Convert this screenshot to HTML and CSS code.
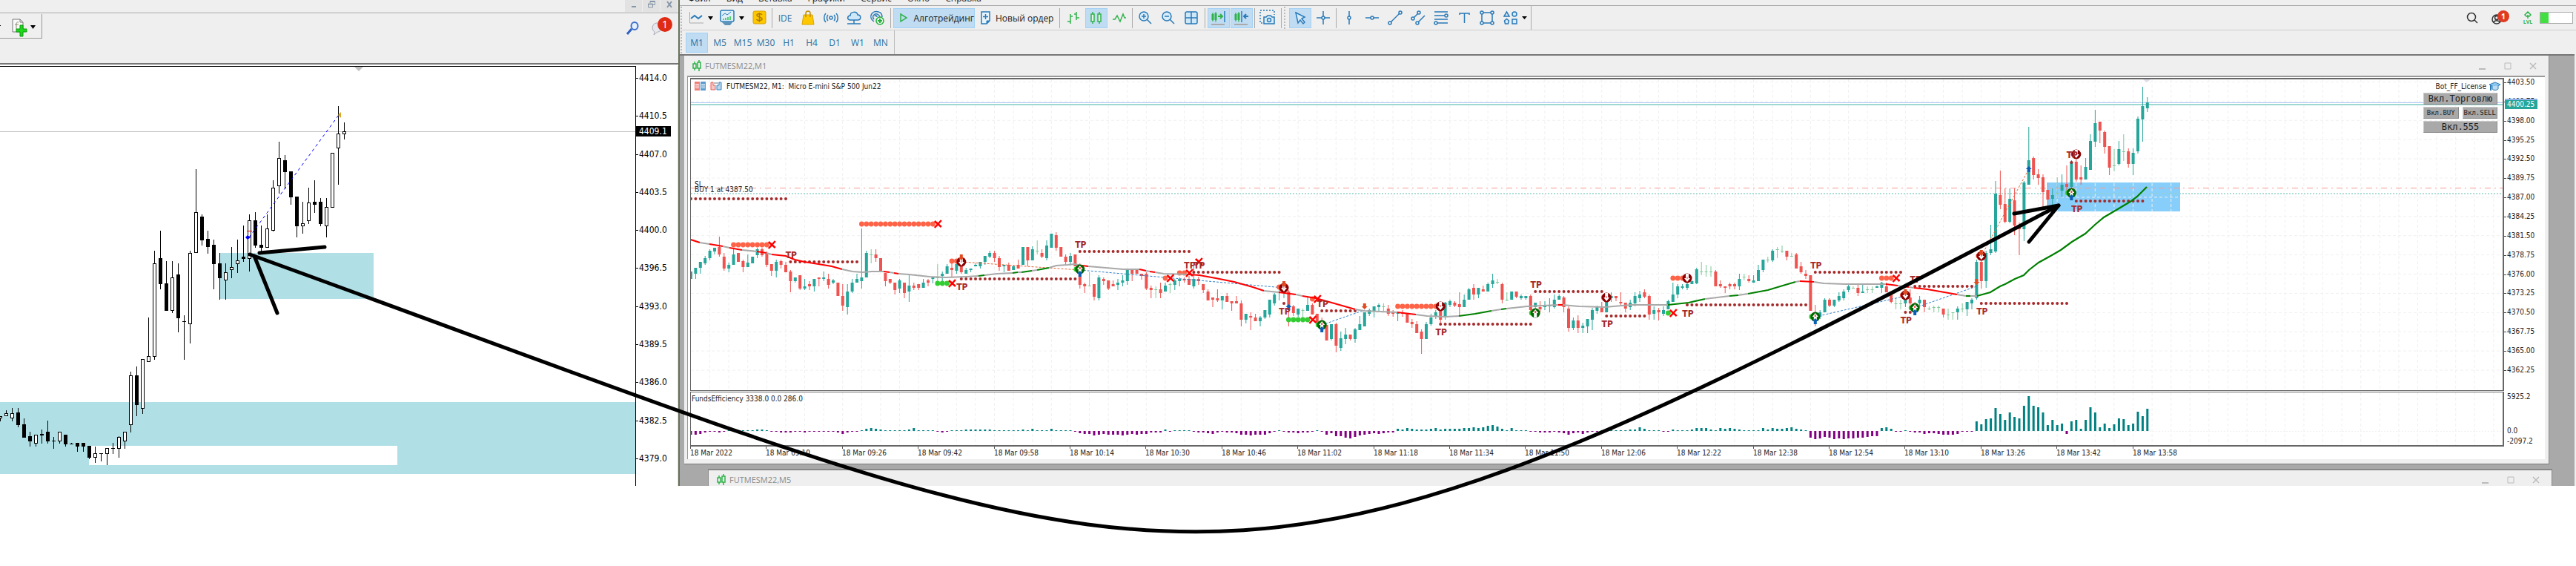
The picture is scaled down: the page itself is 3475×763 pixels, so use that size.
FILE: index.html
```html
<!DOCTYPE html>
<html lang="ru">
<head>
    <meta charset="UTF-8">
    <meta name="viewport" content="width=device-width, initial-scale=1.0">
    <title>FUTMESM22,M1</title>
    <link rel="stylesheet" href="styles.css">
</head>
<body>
    <div class="desktop">
        <section class="terminal-left">
            <div class="left-title">
                <button aria-label="Свернуть"><svg width="12" height="12"><path d="M3 9h6" stroke="#8796a8" stroke-width="2"/></svg></button>
                <button aria-label="Восстановить"><svg width="12" height="12" fill="none" stroke="#8796a8" stroke-width="1"><path d="M4 4V1.500h6.500v5H8M1.500 5h6v5h-6zM4 2.500h6.500M1.500 6h6"/></svg></button>
                <button aria-label="Закрыть"><svg width="12" height="12"><path d="M3 2l6 8M9 2l-6 8" stroke="#8796a8" stroke-width="2"/></svg></button>
            </div>
            <div class="left-toolbar">
                <button class="indicator-btn" aria-label="Индикаторы">
                    <svg width="54" height="30" viewBox="0 0 54 30">
                        <path d="M0 14h1v1H0z"/>
                        <path d="M17 6h10l4 4v13H17z" fill="#fafafa" stroke="#777"/>
                        <path d="M27 6v4h4" fill="none" stroke="#777"/>
                        <path d="M25 10c-3-1-3 2-3 4v5M20 13h5" fill="none" stroke="#8a8a70"/>
                        <path d="M27 14h4v5h5v4h-5v6h-4v-6h-5v-4h5z" fill="#1fd61f" stroke="#0b9a0b"/>
                        <path d="M41 14h7l-3.500 5z"/>
                    </svg>
                </button>
                <div class="left-tools">
                    <button aria-label="Поиск"><svg width="20" height="20" fill="none"><path d="M8 11l-6 7" stroke="#2f62c0" stroke-width="3"/><ellipse cx="12" cy="7" rx="4.500" ry="5" fill="#e4f0ff" stroke="#3f6fc8" stroke-width="2"/></svg></button>
                    <button class="chat" aria-label="Сообщения"><svg width="34" height="28"><path d="M10 10c-6 0-8 9-3 12l-1 4 5-4c7 0 8-12-1-12z" fill="#e6e8ee" stroke="#a9adb5"/><circle cx="21" cy="12" r="10" fill="#e02b14"/><text x="21" y="17" class="badge-text">1</text></svg></button>
                </div>
            </div>
            <div class="left-body">
                <svg class="left-chart" id="left-chart"></svg>
                <div class="left-axis" id="left-axis">
                    <span class="left-price">4409.1</span>
                </div>
            </div>
        </section>

        <section class="terminal-right">
            <nav class="menu">
                <a href="#">Файл</a><a href="#">Вид</a><a href="#">Вставка</a><a href="#">Графики</a><a href="#">Сервис</a><a href="#">Окно</a><a href="#">Справка</a>
            </nav>
            <div class="toolbar">
                <span class="grip"></span>
                <button class="drop" aria-label="График"><svg width="34" height="22"><path d="M1.500 3v15H20" fill="none" stroke="#aaa"/><path d="M3 12l5-4 5 4 5-4" fill="none" stroke="#2a7ab8" stroke-width="2"/><path d="M26 9h7l-3.500 5z"/></svg></button>
                <button class="drop" aria-label="Шаблоны"><svg width="34" height="22"><rect x="1" y="1" width="18" height="15" rx="2" fill="#dff0fb" stroke="#2a7ab8" stroke-width="1.500"/><path d="M3 8l4-3 3 2 5-4" fill="none" stroke="#2a7ab8"/><path d="M5 14v-2M8 14v-3M11 14v-4M14 14V9" stroke="#2fbf4a" stroke-width="1.500"/><path d="M3 17l4 4h7l3-4z" fill="#5d93b8"/><path d="M26 9h7l-3.500 5z"/></svg></button>
                <button class="tool" aria-label="Символы"><svg width="20" height="20"><rect x="2" y="1" width="17" height="17" rx="2" fill="#fdc800" stroke="#d9a200"/><path d="M14 6c-1-2-7-2-7 .500 0 3 7 2 7 5 0 2.500-6 3-7.500 .500M10.500 3v13" fill="none" stroke="#b07c00" stroke-width="1.500"/></svg></button>
                <span class="sep"></span>
                <button class="tool ide">IDE</button>
                <button class="tool" aria-label="Маркет"><svg width="20" height="20"><path d="M4 6h12l2 13H2z" fill="#fdc800" stroke="#dba400"/><path d="M7 9V4c0-4 6-4 6 0v5" fill="none" stroke="#c28f00" stroke-width="1.500"/></svg></button>
                <button class="tool" aria-label="Сигналы"><svg width="20" height="20" fill="none" stroke="#2a7ab8" stroke-width="1.500"><circle cx="10" cy="10" r="2"/><path d="M6 6c-2 2-2 6 0 8M14 6c2 2 2 6 0 8M3 4c-3 3-3 9 0 12M17 4c3 3 3 9 0 12"/></svg></button>
                <button class="tool" aria-label="VPS"><svg width="20" height="20" fill="none" stroke="#2a7ab8" stroke-width="1.500"><path d="M5 13c-5 0-4-6 0-6 0-6 9-6 10-1 5 0 5 7 0 7z" fill="#cfe8f8"/><path d="M10 13v5M1 18h18"/></svg></button>
                <button class="tool" aria-label="Трансляция"><svg width="20" height="20" fill="none" stroke="#2a7ab8" stroke-width="1.500"><path d="M6 15C-3 9 4-1 12 2c4 1 5 5 5 7M6 12C2 7 8 3 12 6c1 1 2 2 2 3M7 8c1-2 3-1 3 1"/><circle cx="14" cy="14" r="5" fill="#e6f8e6" stroke="#27ae3f"/><path d="M14 11v6M11 14h6" stroke="#27ae3f" stroke-width="2"/></svg></button>
                <span class="sep wide"></span>
                <button class="text-tool active"><svg width="12" height="14"><path d="M2 2l8 5-8 5z" fill="none" stroke="#2fb34a" stroke-width="1.500"/></svg>Алготрейдинг</button>
                <button class="text-tool order"><svg width="14" height="18"><path d="M1 1h11v12l-4 4H1z" fill="#e9f5fd" stroke="#2a7ab8" stroke-width="1.500"/><path d="M8 17v-4h4" fill="#2a7ab8" stroke="#2a7ab8"/><path d="M6.500 4v7M3 7.500h7" stroke="#2a7ab8" stroke-width="1.500"/></svg>Новый ордер</button>
                <span class="sep wide"></span>
                <button class="tool" aria-label="Бары"><svg width="20" height="20" fill="none" stroke="#2fb34a" stroke-width="1.500"><path d="M6 5v13M2 15h4M6 8h3M14 2v11M11 5h3M14 10h4"/></svg></button>
                <button class="tool active" aria-label="Свечи"><svg width="20" height="20" fill="#e4f7e4" stroke="#2fb34a" stroke-width="1.500"><path d="M5 2v16M14 2v16"/><rect x="3" y="5" width="4" height="10"/><rect x="12" y="5" width="4" height="10"/></svg></button>
                <button class="tool" aria-label="Линия"><svg width="20" height="20" fill="none" stroke="#2fb34a" stroke-width="1.500"><path d="M1 12h3l3-5 4 8 4-10 2 5h2"/></svg></button>
                <span class="sep"></span>
                <button class="tool" aria-label="Увеличить"><svg width="20" height="20" fill="none" stroke="#2a7ab8" stroke-width="1.500"><circle cx="8" cy="8" r="6" fill="#d8edf9"/><path d="M12 12l6 6M8 5v6M5 8h6"/></svg></button>
                <button class="tool" aria-label="Уменьшить"><svg width="20" height="20" fill="none" stroke="#2a7ab8" stroke-width="1.500"><circle cx="8" cy="8" r="6" fill="#d8edf9"/><path d="M12 12l6 6M5 8h6"/></svg></button>
                <button class="tool" aria-label="Окна"><svg width="20" height="20" fill="#cfe8f8" stroke="#2a7ab8" stroke-width="1.500"><rect x="2" y="2" width="16" height="16" rx="2"/><path d="M10 2v16M2 10h16"/></svg></button>
                <span class="sep wide"></span>
                <button class="tool active" aria-label="Автопрокрутка"><svg width="22" height="22" fill="#2fb34a" stroke="#2fb34a"><path d="M3 4v12M7 3v14" stroke-width="1"/><path d="M2 6h2v8H2zM6 5h2v9H6z"/><path d="M10 9h6M13 6l3 3-3 3" fill="none" stroke-width="2"/><path d="M19 2v15" stroke="#2a7ab8" stroke-width="1.500"/><path d="M1 20h18" stroke="#aaa" stroke-width="2"/></svg></button>
                <button class="tool active" aria-label="Сдвиг"><svg width="22" height="22" fill="#2fb34a" stroke="#2fb34a"><path d="M3 4v12M7 3v14" stroke-width="1"/><path d="M2 6h2v8H2zM6 5h2v9H6z"/><path d="M11 2v15" stroke="#2a7ab8" stroke-width="1.500"/><path d="M20 9h-6M17 6l-3 3 3 3" fill="none" stroke="#2a7ab8" stroke-width="2"/><path d="M1 20h18" stroke="#aaa" stroke-width="2"/></svg></button>
                <span class="sep"></span>
                <button class="tool" aria-label="Снимок"><svg width="22" height="22" fill="none" stroke="#2a7ab8" stroke-width="1.500"><path d="M4 18H1V1h19v6" stroke-dasharray="2 2"/><path d="M6 10h3l2-2h4l2 2h3v9H6z" fill="#d8edf9"/><circle cx="13" cy="14" r="2.500"/></svg></button>
                <span class="sep wide"></span>
                <span class="grip second"></span>
                <button class="tool active" aria-label="Курсор"><svg width="20" height="20"><path d="M4 3l12 6-4 2 4 5-2 2-4-5-3 4z" fill="#d8edf9" stroke="#2a7ab8" stroke-width="1.500"/></svg></button>
                <button class="tool" aria-label="Перекрестие"><svg width="20" height="20" fill="#efefef" stroke="#2a7ab8" stroke-width="1.500"><path d="M10 1v18M1 10h18"/><circle cx="10" cy="10" r="2"/></svg></button>
                <span class="sep"></span>
                <button class="tool" aria-label="Вертикальная линия"><svg width="20" height="20" fill="#efefef" stroke="#2a7ab8" stroke-width="1.500"><path d="M10 1v18"/><circle cx="10" cy="10" r="2"/></svg></button>
                <button class="tool" aria-label="Горизонтальная линия"><svg width="20" height="20" fill="#efefef" stroke="#2a7ab8" stroke-width="1.500"><path d="M1 10h18"/><circle cx="10" cy="10" r="2"/></svg></button>
                <button class="tool" aria-label="Трендовая линия"><svg width="20" height="20" fill="#efefef" stroke="#2a7ab8" stroke-width="1.500"><path d="M3 17L17 3"/><circle cx="3" cy="17" r="2"/><circle cx="17" cy="3" r="2"/></svg></button>
                <button class="tool" aria-label="Канал"><svg width="20" height="20" fill="#efefef" stroke="#2a7ab8" stroke-width="1.500"><path d="M3 11l8-8M9 17l10-10"/><circle cx="3" cy="11" r="2"/><circle cx="11" cy="3" r="2"/><circle cx="9" cy="17" r="2"/></svg></button>
                <button class="tool" aria-label="Фибоначчи"><svg width="20" height="20" fill="#efefef" stroke="#2a7ab8" stroke-width="1.500"><path d="M1 2h18M1 7h15M1 12h18M4 17h15"/><circle cx="17" cy="7" r="2"/><circle cx="3" cy="17" r="2"/></svg></button>
                <button class="tool" aria-label="Текст"><svg width="20" height="20" fill="none" stroke="#2a7ab8" stroke-width="1.500"><path d="M4 6V4h13v2M10.500 4v13"/></svg></button>
                <button class="tool" aria-label="Прямоугольник"><svg width="20" height="20" fill="#efefef" stroke="#2a7ab8" stroke-width="1.500"><path d="M3 3h14v14H3z"/><circle cx="3" cy="3" r="2"/><circle cx="17" cy="3" r="2"/><circle cx="3" cy="17" r="2"/><circle cx="17" cy="17" r="2"/></svg></button>
                <button class="drop shapes" aria-label="Фигуры"><svg width="32" height="20" fill="#d8edf9" stroke="#2a7ab8" stroke-width="1.500"><path d="M1 8l3.500-6L8 8z"/><circle cx="15" cy="5" r="3"/><path d="M4.500 11.500l3 2.500-1 4h-4l-1-4z"/><rect x="12" y="12" width="6" height="6"/><path d="M25 8h7l-3.500 4z" fill="#000" stroke="none"/></svg></button>
                <div class="status">
                    <svg width="16" height="16" fill="none" stroke="#333" stroke-width="1.500"><circle cx="7" cy="7" r="5.500"/><path d="M11 11l4 4"/></svg>
                    <svg width="26" height="20" fill="none" stroke="#333" stroke-width="1.500"><circle cx="8" cy="12" r="6"/><circle cx="8" cy="10" r="2.500"/><path d="M4 16c1-3 7-3 8 0"/><circle cx="17" cy="8" r="8" fill="#e03a22" stroke="none"/><text x="17" y="12" class="badge-small">1</text></svg>
                    <svg width="14" height="18" fill="none" stroke="#2fb34a" stroke-width="1.500"><path d="M7 1l4 4-2 2H5L3 5zM7 5v5"/><text x="7" y="17" class="lvl">LVL</text></svg>
                    <div class="level" role="meter" aria-label="LVL" aria-valuenow="26"><div style="width: 26%"></div></div>
                </div>
            </div>
            <div class="frames-bar">
                <span class="grip"></span>
                <button class="tool active">M1</button>
                <button class="tool">M5</button>
                <button class="tool">M15</button>
                <button class="tool">M30</button>
                <button class="tool">H1</button>
                <button class="tool">H4</button>
                <button class="tool">D1</button>
                <button class="tool">W1</button>
                <button class="tool">MN</button>
            </div>

            <div class="mdi">
                <div class="window">
                    <div class="window-title">
                        <svg width="12" height="16" fill="none" stroke="#2fb34a" stroke-width="1.500"><path d="M3 2v12M9 0v15"/><rect x="1" y="5" width="4" height="6" fill="#efefef"/><rect x="7" y="3" width="4" height="8" fill="#efefef"/></svg>
                        <h2>FUTMESM22,M1</h2>
                        <div class="window-buttons">
                            <button aria-label="Свернуть"><svg width="10" height="10"><path d="M0 9h9" stroke="#bbb" stroke-width="2"/></svg></button>
                            <button aria-label="Развернуть"><svg width="10" height="10"><path d="M1 1h8v8H1z" fill="none" stroke="#bbb" stroke-width="1"/></svg></button>
                            <button aria-label="Закрыть"><svg width="10" height="10"><path d="M1 1l8 8M9 1l-8 8" stroke="#bbb" stroke-width="1.500"/></svg></button>
                        </div>
                    </div>
                    <div class="frame">
                        <div class="panes">
                            <svg class="price-pane" id="price-pane"></svg>
                            <div class="chart-caption">
                                <svg width="15" height="12"><path d="M0 0h7v12H0z" fill="#ef7f79"/><path d="M8 0h7v12H8z" fill="#5a9bcd"/><path d="M1 3.500h5M1 6h5M1 8.500h5M9 3.500h5M9 6h5M9 8.500h5" stroke="#fff"/></svg>
                                <svg width="16" height="12"><path d="M1 1h3v4h3v6H1z" fill="#f7c7c4" stroke="#e2635c"/><path d="M15 1h-3v4H9v6h6z" fill="#b9d8ee" stroke="#3984bf"/><path d="M5 1h6v2H5z" fill="#bbb"/></svg>
                                <span>FUTMESM22, M1:&nbsp; Micro E-mini S&amp;P 500 Jun22</span>
                            </div>
                            <div class="bot">
                                <div class="bot-name">Bot_FF_License
                                    <svg width="15" height="13" stroke="#2a7ab8"><path d="M0 4l8-3 7 3-7 4z" fill="#8cc8ee"/><path d="M4 6v4c2 2 6 2 8 0V6" fill="#b9dcf2"/><path d="M2 5v7" stroke-width="2"/></svg>
                                </div>
                                <button>Вкл.Торговлю</button>
                                <div class="bot-pair">
                                    <button>Вкл.BUY</button>
                                    <button>Вкл.SELL</button>
                                </div>
                                <button>Вкл.555</button>
                            </div>
                            <svg class="funds-pane" id="funds-pane"></svg>
                            <svg class="time-axis" id="time-axis"></svg>
                        </div>
                        <div class="scales">
                            <div class="price-axis" id="price-axis">
                                <span class="last-price">4400.25</span>
                            </div>
                            <div class="funds-axis">
                                <span>5925.2</span>
                                <span class="zero">0.0</span>
                                <span>-2097.2</span>
                            </div>
                        </div>
                    </div>
                </div>
                <div class="window next">
                    <div class="window-title">
                        <svg width="12" height="16" fill="none" stroke="#2fb34a" stroke-width="1.500"><path d="M3 2v12M9 0v15"/><rect x="1" y="5" width="4" height="6" fill="#efefef"/><rect x="7" y="3" width="4" height="8" fill="#efefef"/></svg>
                        <h2>FUTMESM22,M5</h2>
                        <div class="window-buttons">
                            <button aria-label="Свернуть"><svg width="10" height="10"><path d="M0 9h9" stroke="#bbb" stroke-width="2"/></svg></button>
                            <button aria-label="Развернуть"><svg width="10" height="10"><path d="M1 1h8v8H1z" fill="none" stroke="#bbb" stroke-width="1"/></svg></button>
                            <button aria-label="Закрыть"><svg width="10" height="10"><path d="M1 1l8 8M9 1l-8 8" stroke="#bbb" stroke-width="1.500"/></svg></button>
                        </div>
                    </div>
                </div>
            </div>
        </section>
    </div>

    <!-- hand drawn arrow between the two terminals -->
    <svg class="arrow">
        <path d="M337 343C1630 810 1610 895 2777 277"/>
        <path d="M438 333L350 341M343 345L374 422"/>
        <path d="M2717 288L2777 277L2737 326"/>
    </svg>

    <script src="charts.js"></script>
</body>
</html>
```
FILE: styles.css
```css
* {
    box-sizing: border-box;
}

body {
    margin: 0;
    background-color: #fff;
    color: #222;
    font-family: "Open Sans", "Noto Sans", sans-serif;
    font-size: 12px;
}

button {
    margin: 0;
    padding: 0;
    border: none;
    background: none;
    color: inherit;
    font: inherit;
    cursor: pointer;
}

svg {
    display: block;
}

.desktop {
    display: grid;
    grid-template-columns: 915fr 2560fr;
    height: 655px;
    overflow: hidden;
}

/* left terminal */
.terminal-left {
    display: flex;
    flex-direction: column;
    min-width: 0;
    background-color: #efefef;
}

.left-title {
    display: flex;
    justify-content: flex-end;
    gap: 1px;
    height: 18px;
    padding-right: 1px;
    border-bottom: 1px solid #999;
}

.left-title button {
    display: flex;
    justify-content: center;
    width: 23px;
    height: 16px;
    background-color: #e2e2e2;
}

.left-toolbar {
    display: flex;
    justify-content: space-between;
    align-items: flex-start;
    height: 69px;
    border-top: 1px solid #fff;
    border-bottom: 2px solid #777;
}

.indicator-btn {
    width: 57px;
    height: 33px;
    border-right: 1px solid #999;
    border-bottom: 1px solid #999;
}

.left-tools {
    display: flex;
    gap: 12px;
    padding: 6px 5px 0 0;
}

.left-tools button {
    margin-top: 1px;
}

.chat svg {
    margin-top: -5px;
}

.badge-text {
    fill: #fff;
    font-size: 14px;
    text-anchor: middle;
}

.left-body {
    display: flex;
    flex: 1;
    padding-top: 2px;
    background-color: #fff;
}

.left-chart {
    flex: 1;
    min-width: 0;
    height: 566px;
    border-top: 1px solid #000;
    border-right: 1px solid #000;
}

.left-axis {
    position: relative;
    display: flex;
    flex-direction: column;
    justify-content: space-between;
    width: 57px;
    padding: 9px 0 31px 4px;
    border-right: 1px solid #ddd;
    color: #000;
    font-family: "DejaVu Sans Condensed", "DejaVu Sans", sans-serif;
    line-height: 14px;
}

.left-axis span::before {
    content: "";
    float: left;
    width: 3px;
    height: 1px;
    margin: 7px 0 0 -4px;
    background-color: #000;
}

.left-axis .left-price {
    position: absolute;
    top: 81px;
    left: 0;
    padding: 0 5px 0 4px;
    background-color: #000;
    color: #fff;
}

/* right terminal */
.terminal-right {
    display: flex;
    flex-direction: column;
    min-width: 0;
    border-left: 2px solid #65705a;
    background-color: #efefef;
}

.menu {
    display: flex;
    gap: 21px;
    height: 7px;
    padding-left: 11px;
    overflow: hidden;
    line-height: 16px;
}

.menu a {
    height: 16px;
    margin-top: -10px;
    color: #222;
    text-decoration: none;
}

.toolbar {
    display: flex;
    align-items: center;
    gap: 1px;
    height: 34px;
    padding-left: 1px;
    border-top: 1px solid #aaa;
    border-bottom: 1px solid #ccc;
}

.grip {
    width: 2px;
    height: 30px;
    margin-right: 4px;
    border-left: 2px dotted #bbb;
}

.grip.second {
    width: 3px;
    margin-right: 3px;
}

.sep {
    width: 1px;
    height: 27px;
    margin: 0 1px;
    background-color: #aaa;
}

.sep.wide {
    margin: 0 2px;
}

.tool {
    display: flex;
    flex: none;
    justify-content: center;
    align-items: center;
    width: 30px;
    height: 27px;
    color: #2a6f9f;
}

.drop {
    flex: none;
    width: 41px;
    padding-left: 4px;
}

.drop.shapes {
    width: 44px;
    height: 32px;
    padding-left: 6px;
    border-right: 1px solid #aaa;
}

.active {
    border: 1px solid #a3d1f5;
    background-color: #c0dcf3;
}

.text-tool {
    display: flex;
    align-items: center;
    gap: 8px;
    width: 110px;
    height: 27px;
    padding-left: 7px;
    white-space: nowrap;
}

.text-tool.order {
    gap: 6px;
}

.status {
    display: flex;
    align-items: center;
    gap: 17px;
    margin-left: auto;
    padding-right: 4px;
}

.badge-small {
    fill: #fff;
    stroke: none;
    font-size: 11px;
    font-weight: bold;
    text-anchor: middle;
}

.lvl {
    fill: #2fb34a;
    stroke: none;
    font-size: 7px;
    font-weight: bold;
    text-anchor: middle;
}

.level {
    width: 45px;
    height: 16px;
    margin-left: -8px;
    border: 1px solid #aaa;
    background-color: #fff;
}

.level div {
    height: 100%;
    background-color: #41df41;
}

.frames-bar {
    display: flex;
    align-items: center;
    gap: 1px;
    width: 290px;
    height: 32px;
    padding-left: 1px;
    border-right: 1px solid #bbb;
}

.mdi {
    flex: 1;
    min-height: 0;
    margin-right: 2px;
    padding: 0 34px 0 6px;
    border-top: 2px solid #777;
    background-color: #a9a9a9;
}

.window {
    height: 551px;
    border-right: 1px solid #888;
    border-bottom: 1px solid #777;
    background-color: #efefef;
}

.window.next {
    height: 24px;
    margin: 6px -4px 0 32px;
    border-top: 2px solid #888;
    border-left: 1px solid #888;
}

.window-title {
    display: flex;
    align-items: center;
    gap: 5px;
    height: 27px;
    padding: 0 16px 0 11px;
}

.window.next .window-title {
    height: 25px;
}

.window-title h2 {
    margin: 0;
    color: #8c8c8c;
    font-size: 11px;
    font-weight: normal;
}

.window-buttons {
    display: flex;
    gap: 24px;
    margin-left: auto;
}

.frame {
    display: flex;
    height: 517px;
    margin: 0 5px 0 4px;
    padding: 1px 0 0 3px;
    border-top: 2px solid #999;
    border-left: 1px solid #999;
    background-color: #fff;
}

.panes {
    position: relative;
    flex: 1;
    min-width: 0;
    font-family: "DejaVu Sans Condensed", "DejaVu Sans", sans-serif;
    font-size: 10px;
}

.price-pane,
.funds-pane,
.time-axis {
    width: 100%;
    border: 0 solid #666;
}

.price-pane {
    height: 422px;
    border-width: 2px 2px 1px 1px;
}

.funds-pane {
    height: 74px;
    margin-top: 1px;
    border-width: 1px 2px 2px 1px;
}

.time-axis {
    height: 18px;
}

.panes text {
    fill: #222;
}

.panes .tp {
    fill: #a52a2a;
    font-size: 12px;
    font-weight: bold;
    text-anchor: middle;
}

.chart-caption {
    position: absolute;
    top: 5px;
    left: 6px;
    display: flex;
    align-items: center;
    gap: 6px;
    height: 12px;
}

/* expert panel drawn over the chart */
.bot {
    position: absolute;
    top: 5px;
    right: 9px;
    display: flex;
    flex-direction: column;
    gap: 3px;
    width: 100px;
}

.bot-name {
    display: flex;
    align-items: center;
    justify-content: flex-end;
    gap: 4px;
    height: 12px;
    margin-right: -4px;
}

.bot button {
    height: 16px;
    border: 1px solid #c9c9c9;
    border-right-color: #888;
    border-bottom-color: #888;
    background-color: #a9a9a9;
    font-family: "DejaVu Sans Mono", monospace;
    font-size: 12px;
    line-height: 14px;
    white-space: nowrap;
}

.bot-pair {
    display: grid;
    grid-template-columns: 1fr 1fr;
    gap: 5px;
}

.bot .bot-pair button {
    font-size: 9px;
}

.scales {
    width: 55px;
    font-family: "DejaVu Sans Condensed", "DejaVu Sans", sans-serif;
    font-size: 10px;
    line-height: 12px;
}

.price-axis {
    position: relative;
    display: flex;
    flex-direction: column;
    justify-content: space-between;
    height: 400px;
    padding-left: 4px;
}

.price-axis span::before {
    content: "";
    float: left;
    width: 3px;
    height: 1px;
    margin: 6px 0 0 -4px;
    background-color: #444;
}

.price-axis .last-price {
    position: absolute;
    top: 28px;
    left: 1px;
    width: 44px;
    padding: 0 3px;
    border-top: 2px solid #8fb2e8;
    background-color: #26a69a;
    color: #fff;
}

.price-axis .last-price::before {
    display: none;
}

.funds-axis {
    display: flex;
    flex-direction: column;
    height: 72px;
    margin-top: 24px;
    padding-left: 4px;
}

.funds-axis .zero {
    margin: 34px 0 2px;
}

.arrow {
    position: absolute;
    top: 0;
    left: 0;
    width: 100%;
    height: 763px;
    fill: none;
    stroke: #000;
    stroke-width: 5;
    stroke-linecap: round;
    stroke-linejoin: round;
    pointer-events: none;
}
```
FILE: charts.js
```js
// candle: direction (u/d/n) + high,open-close top,open-close bottom,low
var leftCandles = `u561,561,564,568 u553,557,561,561 u550,557,564,568 d550,556,573,576 d564,572,590,590
d582,588,595,602 u586,586,598,602 d579,585,587,598 d567,582,595,598 n589,594,595,605
u582,582,595,598 d586,586,599,602 n597,598,599,599 d597,597,602,609 d597,597,602,609
d601,601,617,619 u602,611,617,624 n611,611,612,622 u604,604,612,627 n597,604,605,612
u588,589,605,617 u582,582,595,605 u501,506,573,583 d494,506,546,561 u484,484,551,558
u428,480,488,488 u338,355,481,485 d311,348,383,390 d352,382,419,419 u352,374,419,422
d355,370,429,448 n425,433,434,485 u338,341,437,463 u228,286,341,341 d289,292,324,331
d311,322,333,342 d323,330,356,390 d341,355,375,404 u355,367,378,404 u333,360,364,375
u323,351,356,368 d304,346,349,353 u289,297,349,366 d286,297,331,334 d304,330,334,340
u289,308,334,334 u243,253,311,312 u191,213,251,261 d209,216,232,255 d231,231,266,276
d265,265,305,320 u272,301,305,315 u253,273,298,302 d243,272,276,287 d267,272,302,305
u267,279,305,320 u206,206,280,280 u143,180,200,249 u165,177,181,188`;

var candles = `u366,366,376,376 u361,361,369,376 u353,353,361,369 u345,348,355,357 u336,338,348,351
u334,334,339,343 d319,333,343,346 d341,346,362,365 u354,357,362,367 u336,343,357,357
d341,341,353,353 d350,352,360,367 u343,354,360,360 u346,346,355,355 u334,336,344,348
d334,336,344,346 d339,342,357,360 d356,356,365,372 u350,353,365,374 d350,352,357,362
d353,357,367,367 d364,366,379,394 u374,374,379,381 d371,371,389,391 u376,386,389,391
d379,383,386,391 u376,376,386,393 d374,374,376,386 u366,374,376,379 d369,376,384,389
u376,378,381,383 d381,381,399,399 d383,399,412,419 u383,393,414,424 u376,381,393,395
u369,376,381,381 u308,374,379,389 u338,341,374,374 n336,343,343,355 d336,343,348,353
d348,348,366,366 d368,368,379,386 d376,376,381,383 d381,381,391,397 u376,378,389,395
d381,381,395,402 u370,385,393,407 d381,385,388,391 d383,383,388,391 u376,381,388,388
d376,378,381,386 u373,374,376,382 n356,374,374,379 u366,369,372,382 u356,359,369,369
d353,361,364,373 u353,356,365,369 d353,355,367,369 u361,364,369,369 u362,362,364,367
u355,357,359,359 u353,353,359,362 u345,345,353,357 u338,341,346,348 d338,341,348,353
d345,348,360,365 u357,357,359,367 d354,357,365,365 u357,359,364,364 d350,357,362,362
u333,333,357,357 d333,333,351,359 u332,336,351,351 n324,338,338,343 d336,341,346,348
u324,331,348,351 u315,315,334,334 d313,317,334,338 d333,333,346,346 d343,346,353,357
u341,345,353,358 d343,343,359,359 d355,359,384,389 d381,383,386,395 n367,385,385,385
d383,383,400,405 u371,374,402,405 d374,376,379,384 d378,378,389,391 d378,383,386,386
u376,381,384,391 u371,378,381,386 u364,364,379,384 d362,364,369,379 d364,364,369,369
d369,369,372,377 d367,369,389,391 d385,388,391,402 n386,390,390,402 d381,390,395,402
u381,385,393,393 n381,383,383,395 u376,378,384,391 u374,376,379,386 d374,376,378,381
d372,376,384,384 u359,376,386,389 d373,376,379,384 d383,383,391,395 d390,393,405,405
d401,401,404,414 d390,402,405,407 u399,399,405,417 d395,399,407,407 d406,406,409,419
d399,406,409,409 d405,409,431,440 u423,423,431,436 d421,426,428,445 d423,428,433,433
u426,428,433,440 u418,418,428,430 u404,404,424,428 u395,397,409,412 u387,388,390,405
u385,388,393,402 d391,393,413,440 d411,413,422,426 u416,416,424,427 n416,418,418,428
u401,411,419,419 d409,411,424,424 d423,423,436,436 d428,433,438,442 d438,438,459,459
u437,437,457,459 d435,437,466,475 u447,456,469,473 u442,451,457,464 d451,451,457,459
u442,444,457,462 u426,437,445,445 u421,421,440,440 u416,418,423,426 u413,413,419,428
u409,411,414,419 n409,413,413,419 d411,416,423,426 d418,421,423,427 u420,421,423,433
d418,421,423,427 d423,423,435,435 d430,434,437,442 d433,437,449,449 d444,447,457,477
u434,437,457,457 u423,428,437,439 u418,421,426,430 d414,416,431,435 u407,408,428,431
u404,406,411,414 d406,408,412,414 d394,410,414,426 u397,404,414,414 u388,390,404,404
d383,388,397,404 u388,388,397,402 d385,390,393,393 u381,383,393,393 u369,378,383,388
n376,380,380,383 d381,383,404,409 n394,404,404,406 u393,393,404,404 d393,393,400,402
u397,399,402,404 u399,399,402,404 d397,399,418,425 u408,408,414,416 d406,414,417,421
u406,412,414,418 u402,412,413,421 u397,404,414,416 u397,399,404,404 d399,401,414,421
d413,416,442,447 u428,432,442,445 d425,432,442,449 u435,439,442,449 u430,430,440,449
u415,418,431,445 u412,414,419,423 d407,415,421,421 u397,402,421,421 u394,399,402,407
d399,399,402,406 d394,407,409,411 d408,408,416,421 u404,408,414,418 u394,399,409,413
u392,397,402,407 d390,394,400,402 d397,399,424,431 u413,418,423,431 d415,418,421,432
u413,418,423,426 u404,406,417,417 u381,397,407,407 u383,386,397,402 u383,386,388,390
u373,383,388,391 u378,379,383,383 u361,363,382,383 n353,366,366,371 n357,366,366,373
n359,366,366,373 d364,366,386,386 d378,383,386,388 d386,386,388,395 d381,383,386,390
d381,383,386,390 u369,376,386,391 n369,373,373,378 d371,376,379,381 u371,378,381,381
u357,364,379,379 u350,350,364,367 n346,350,350,354 u336,338,351,353 n333,336,336,348
n331,338,338,341 d338,338,346,351 n341,345,345,346 d341,343,362,362 d353,359,367,369
d364,369,372,376 d371,371,419,419 d411,421,427,440 u418,421,427,430 u402,404,421,421
d402,404,412,414 u404,404,412,414 u394,399,405,407 u390,393,402,405 u384,386,391,394
n386,388,388,388 d384,388,395,399 u384,393,395,395 n386,390,390,395 n386,390,390,395
u385,386,388,388 u380,381,388,395 d381,386,394,394 d394,395,407,409 n402,409,409,417
n404,409,409,417 u398,404,409,414 d390,401,409,412 d407,409,413,415 u399,404,409,412
d404,404,414,421 n413,416,416,418 n412,414,414,421 n412,414,414,421 d416,416,424,428
n416,424,424,431 n421,421,421,431 u413,416,421,431 n409,416,416,421 u407,407,417,426
u402,404,409,417 u350,353,402,404 d350,353,379,389 u338,341,379,388 u303,336,341,344
u244,261,339,341 d230,263,276,282 d254,275,299,301 u254,268,299,301 d254,270,304,317
d300,306,309,344 u244,246,309,325 u171,216,249,249 d211,213,236,242 d228,235,240,249
d235,239,259,280 d246,256,269,288 u254,263,268,277 n239,260,260,268 u235,249,257,266
d223,248,252,257 u216,218,252,258 d215,218,242,245 d223,239,242,249 u213,225,242,242
u181,190,229,229 u148,166,191,198 d164,164,176,193 d176,178,198,207 d197,197,226,236
n201,223,223,231 u190,201,221,223 n181,204,204,217 d200,204,221,226 u200,206,221,236
u157,160,204,207 u117,143,161,191 u131,138,146,151`;

var funds = [
    -5, -5, -4, -2, -1, -1, -2, -1, 1, 1, 1, 1, 1, 1, 2, 2, 1, -1, -1, -2,
    -2, -2, -1, -1, -2, -1, -1, -1, -1, -1, -1, -2, -4, -2, -1, -1, 1, 3, 4, 3,
    2, 1, 1, 1, 1, 1, 2, 4, 1, 1, 1, 1, -1, -2, -1, 1, 1, 1, 2, 2,
    2, 2, 2, 2, 1, 1, 1, 1, 1, 1, 2, 1, 3, 1, 1, 1, 3, 1, 1, 1,
    1, -1, -3, -4, -4, -6, -5, -4, -5, -5, -5, -6, -5, -4, -5, -4, -4, -2, -2, -2,
    2, -1, 1, 1, 1, 1, -1, -2, -2, -3, -4, -2, -1, -2, -2, -3, -5, -5, -6, -5,
    -5, -5, -3, -1, 1, -1, -2, -2, -3, -2, -2, -1, 1, -1, -5, -3, -7, -7, -9, -10,
    -8, -6, -5, -4, -3, -4, -3, -2, -2, 3, 2, 4, 3, 2, 2, 2, 3, 4, 2, 3,
    3, 3, 3, 4, 4, 5, 4, 5, 7, 8, 6, 3, 1, 4, 1, 1, 1, -1, -1, -2,
    -2, -2, -1, -2, -3, -5, -3, -2, -4, -2, -1, -1, 1, 1, 3, 1, 1, 1, 2, 2,
    5, 3, 1, 1, 1, -1, -1, 2, 1, 1, 1, 2, 4, 4, 4, 2, 1, 4, 3, 4,
    3, 2, 1, 1, 1, 1, 4, 2, 4, 3, 3, 4, 5, 3, 2, 1, -9, -11, -10, -8,
    -9, -11, -10, -11, -10, -10, -9, -9, -8, -7, -7, 4, 5, 3, -1, -1, 1, -1, -2, -2,
    -4, -3, -3, -4, -5, -5, -5, -4, -1, -1, -1, 13, 9, 16, 17, 31, 23, 15, 25, 19,
    17, 34, 47, 34, 32, 25, 8, 15, 8, 10, -4, 13, 15, 3, 15, 32, 25, 5, 10, 4,
    9, 17, 16, 8, 10, 26, 20, 30
];

// rows of dots: first bar, last bar, y, kind
var dots = [
    [0, 20, 268, 'b'], [9, 16, 330, 'o'], [21, 35, 353, 'b'], [36, 51, 302, 'o'], [55, 56, 352, 'o'],
    [52, 54, 382, 'g'], [57, 81, 376, 'b'], [82, 105, 339, 'b'], [100, 100, 375, 'o'], [103, 104, 368, 'o'],
    [106, 124, 367, 'b'], [124, 124, 387, 'o'], [125, 125, 409, 'b'], [126, 130, 431, 'g'], [131, 131, 403, 'o'],
    [133, 140, 419, 'b'], [149, 157, 413, 'o'], [158, 177, 437, 'b'], [178, 192, 393, 'b'], [193, 201, 426, 'b'],
    [206, 206, 422, 'g'], [207, 209, 375, 'o'], [210, 235, 411, 'b'], [237, 255, 367, 'b'], [251, 253, 375, 'o'],
    [256, 257, 421, 'b'], [258, 270, 386, 'b'], [272, 290, 409, 'b'], [291, 291, 219, 'b'], [292, 306, 271, 'b']
];
var crosses = [[17, 330], [52, 302], [55, 382], [101, 375], [105, 368], [107, 353], [131, 431], [132, 403], [207, 422], [254, 375]];
var tps = [[21, 343], [57, 386], [82, 329], [105, 357], [107, 357], [125, 419], [133, 409], [158, 447], [178, 383], [193, 436],
    [210, 422], [237, 357], [256, 431], [258, 376], [272, 419], [291, 208], [292, 281]];
var sells = [[57, 353], [125, 388], [158, 413], [193, 401], [210, 375], [256, 398], [272, 345], [292, 208]];
var buys = [[82, 363], [133, 438], [178, 422], [237, 427], [258, 415], [291, 260]];
var downs = [[57, 347], [125, 383], [142, 413], [256, 394], [271, 380], [272, 341]];
var ups = [[82, 369], [126, 414], [133, 444], [237, 433], [258, 421], [282, 228], [291, 266]];
var deals = [[57, 353, 82, 364, '#e8663a'], [82, 364, 125, 388, '#2f7fc8'], [133, 438, 142, 418, '#2f7fc8'],
    [237, 427, 256, 399, '#2f7fc8'], [258, 415, 271, 386, '#2f7fc8'], [272, 345, 282, 228, '#e8663a']];

// moving average, one entry per colour run
var average = [
    ['r', '932,323 944,327'], ['s', '944,327 957,329'], ['r', '957,329 975,332'], ['s', '975,332 984,334'],
    ['r', '984,334 1001,337'], ['s', '1001,337 1021,339'], ['r', '1021,339 1034,341'], ['s', '1034,341 1041,343'],
    ['r', '1041,343 1060,345 1072,350 1085,353 1104,356 1122,359 1136,363'],
    ['s', '1136,363 1150,366 1164,367 1176,366 1192,366'], ['r', '1192,366 1200,367'], ['s', '1200,367 1206,368'],
    ['r', '1206,368 1212,369'], ['s', '1212,369 1226,370 1254,373 1276,374 1303,373 1320,372'],
    ['g', '1320,372 1328,371'], ['s', '1328,371 1345,369 1366,368'], ['g', '1366,368 1373,367'],
    ['s', '1373,367 1378,367'], ['g', '1378,367 1392,365'], ['s', '1392,365 1399,364'], ['g', '1399,364 1415,361'],
    ['s', '1415,361 1425,358 1440,357 1450,356 1460,358'], ['r', '1460,358 1468,359'],
    ['s', '1468,359 1480,360 1515,363 1537,363'], ['r', '1537,363 1546,365'], ['s', '1546,365 1551,366'],
    ['r', '1551,366 1558,367'], ['s', '1558,367 1570,369 1604,370'],
    ['r', '1604,370 1618,371 1640,375 1665,380 1690,387 1705,392'], ['s', '1705,392 1725,394'],
    ['r', '1725,394 1748,397'], ['s', '1748,397 1757,399'], ['r', '1757,399 1775,402 1800,409 1828,417'],
    ['s', '1828,417 1840,419 1885,421'], ['r', '1885,421 1910,424'], ['s', '1910,424 1925,426 1950,427 1968,426'],
    ['g', '1968,426 1990,423 2012,419'], ['s', '2012,419 2025,417'], ['g', '2025,417 2032,416'],
    ['s', '2032,416 2060,413 2102,411'], ['r', '2102,411 2108,411'],
    ['s', '2108,411 2130,413 2165,414 2200,411 2250,411'], ['g', '2250,411 2278,408 2300,403'],
    ['s', '2300,403 2333,399'], ['g', '2333,399 2345,398'], ['s', '2345,398 2358,396'],
    ['g', '2358,396 2385,391 2405,385 2422,380'], ['s', '2422,380 2428,379'], ['r', '2428,379 2447,380'],
    ['s', '2447,380 2460,382 2490,383 2544,383'], ['r', '2544,383 2560,385'], ['s', '2560,385 2565,386'],
    ['r', '2565,386 2575,387'], ['s', '2575,387 2582,388'], ['r', '2582,388 2600,390 2640,397'],
    ['s', '2640,397 2652,399'], ['g', '2652,399 2658,399'], ['s', '2658,399 2667,399'],
    ['g', '2667,399 2685,394 2698,386 2705,383 2718,376 2730,371 2737,364 2750,354 2768,344 2780,337 2795,326 2813,315 2826,303 2838,293 2855,283 2875,271 2883,265 2896,252']
];

var LEFT = 932, TOP = 107, STEP = 6.4;
var GRID = '#f0f0f0';

function parse(text) {
    return text.split(/\s+/).map(function (item) {
        return { dir: item[0], v: item.slice(1).split(',').map(Number) };
    });
}

function barX(i) {
    return LEFT + i * STEP;
}

function rect(x, y, w, h, fill, extra) {
    return '<rect x="' + x + '" y="' + y + '" width="' + w + '" height="' + h + '" fill="' + fill + '" ' + (extra || '') + '/>';
}

function path(d, stroke, extra) {
    return '<path d="' + d + '" fill="none" stroke="' + stroke + '" ' + (extra || '') + '/>';
}

function gridColumns(y1, y2) {
    var d = '';
    for (var x = 957.5; x < 3378; x += 25.6) {
        d += 'M' + x + ' ' + y1 + 'V' + y2;
    }
    return path(d, GRID, 'stroke-dasharray="4 3"');
}

function drawLeft() {
    var s = rect(0, 542, 857, 97, '#b0e0e6') + rect(120, 601, 416, 26, '#fff') + rect(296, 341, 208, 62, '#b0e0e6');
    s += path('M0 177.5H3000', '#c0c0c0');
    s += '<path d="M478 90h12l-6 6z" fill="#c0c0c0"/>';
    parse(leftCandles).forEach(function (c, i) {
        var x = i * 8, v = c.v;
        s += rect(x, v[0], 1, Math.max(1, v[3] - v[0]), '#000');
        if (c.dir === 'u') {
            s += rect(x - 1.5, v[1] + 0.5, 4, Math.max(2, v[2] - v[1] - 1), '#fff', 'stroke="#000"');
        } else {
            s += rect(x - 2, v[1], 5, Math.max(1, v[2] - v[1]), '#000');
        }
    });
    s += path('M336 320L457 155', '#00f', 'stroke-dasharray="4 4"');
    s += path('M333 311.5h7', 'red') + '<path d="M331 320l4-4v8zM334 317l4 3-4 3z" fill="#00f"/>';
    s += '<path d="M456 155l4-4v8z" fill="#daa520"/>';
    document.getElementById('left-chart').innerHTML = '<g transform="translate(0,-90)">' + s + '</g>';
}

function drawPrice() {
    var s = rect(2763, 246, 178, 39, '#87cefa') + gridColumns(107, 526), i;
    for (i = 0; i < 16; i++) {
        s += path('M932 ' + (110.5 + i * 25.9) + 'H6000', GRID, 'stroke-dasharray="4 3"');
    }
    s += path('M932 138.5H6000', '#a9c4ef') + path('M932 141H6000', '#9fd8d2', 'stroke-width="2"');
    s += path('M932 253.5H6000', '#f79a94', 'stroke-dasharray="8 5 2 5"');
    s += path('M932 261H6000', '#93d2cc', 'stroke-width="1.5" stroke-dasharray="2 2"');
    s += '<path d="M2891 107h10l-5 4z" fill="#e0dce6"/>';

    parse(candles).forEach(function (c, k) {
        var x = barX(k), v = c.v;
        var color = c.dir === 'u' ? '#26a69a' : c.dir === 'd' ? '#ef5350' : '#7fc99a';
        s += rect(x - 0.5, v[0], 1, v[3] - v[0], color);
        if (c.dir === 'n') {
            s += rect(x - 2, v[1], 4, 1, color);
        } else {
            s += rect(x - 2, v[1], 4, Math.max(1, v[2] - v[1]), color);
        }
    });

    deals.forEach(function (d) {
        s += path('M' + barX(d[0]) + ' ' + d[1] + 'L' + barX(d[2]) + ' ' + d[3], d[4], 'stroke-dasharray="3 2"');
    });
    var dotColors = { b: '#a52a2a', o: '#ff6347', g: '#32cd32' };
    dots.forEach(function (row) {
        for (var k = row[0]; k <= row[1]; k++) {
            s += '<circle cx="' + barX(k) + '" cy="' + row[2] + '" r="' + (row[3] === 'b' ? 2 : 3.4) + '" fill="' + dotColors[row[3]] + '"/>';
        }
    });
    var lineColors = { r: '#f00', s: '#a9a9a9', g: '#008000' };
    average.forEach(function (run) {
        s += '<polyline points="' + run[1] + '" fill="none" stroke="' + lineColors[run[0]] + '" stroke-width="2.2"/>';
    });
    buys.forEach(function (m) {
        var x = barX(m[0]), y = m[1];
        s += '<circle cx="' + (x - 5) + '" cy="' + y + '" r="3.4" fill="#32cd32"/><circle cx="' + x + '" cy="' + y + '" r="6.5" fill="#006400"/>';
        s += '<path d="M' + x + ' ' + (y - 5) + 'l4 5h-2v6h-4v-6h-2z" fill="#fff"/>';
        s += rect(x - 1, y - 3, 2, 3, '#ef5350');
    });
    sells.forEach(function (m) {
        var x = barX(m[0]), y = m[1];
        s += '<circle cx="' + (x - 4) + '" cy="' + y + '" r="3.4" fill="#ff6347"/><circle cx="' + x + '" cy="' + y + '" r="6.5" fill="#8b0000"/>';
        s += '<path d="M' + x + ' ' + (y + 5) + 'l4-5h-2v-6h-4v6h-2z" fill="#fff"/>';
        s += rect(x - 0.5, y - 2, 1, 3, '#ef5350');
    });
    downs.forEach(function (m) {
        s += '<path d="M' + barX(m[0]) + ' ' + (m[1] + 4) + 'l4-4h-2v-4h-4v4h-2z" fill="#e2491f"/>';
    });
    ups.forEach(function (m) {
        s += '<path d="M' + barX(m[0]) + ' ' + (m[1] - 4) + 'l4 4h-2v4h-4v-4h-2z" fill="#0a5fb4"/>';
    });
    crosses.forEach(function (m) {
        s += path('M' + (barX(m[0]) - 4) + ' ' + (m[1] - 4) + 'l9 8m0-9l-9 10', '#f00', 'stroke-width="2.5"');
    });
    tps.forEach(function (m) {
        s += '<text class="tp" x="' + (barX(m[0]) + 1) + '" y="' + (m[1] + 5) + '">TP</text>';
    });
    s += '<text x="937" y="252">SL</text><text x="937" y="259">BUY 1 at 4387.50</text>';
    document.getElementById('price-pane').innerHTML = '<g transform="translate(' + -LEFT + ',' + -TOP + ')">' + s + '</g>';
}

function drawFunds() {
    var s = gridColumns(529, 600) + path('M932 581.5H6000', GRID, 'stroke-dasharray="2 2"');
    funds.forEach(function (v, k) {
        s += rect(barX(k) - 1.5, v > 0 ? 581 - v : 581, 3, Math.abs(v), v > 0 ? '#008080' : '#800080');
    });
    s += '<text x="933" y="541">FundsEfficiency 3338.0 0.0 286.0</text>';
    document.getElementById('funds-pane').innerHTML = '<g transform="translate(' + -LEFT + ',-529)">' + s + '</g>';
}

function drawTime() {
    var s = '';
    for (var i = 0; i < 20; i++) {
        var x = Math.round(i * STEP * 16), min = 8 * 60 + 54 + i * 16;
        var time = ('0' + Math.floor(min / 60)).slice(-2) + ':' + ('0' + min % 60).slice(-2);
        s += rect(x, 0, 1, 3, '#555') + '<text x="' + x + '" y="12">18 Mar ' + (i ? time : '2022') + '</text>';
    }
    document.getElementById('time-axis').innerHTML = s;
}

function fillAxis(id, first, step, count, digits) {
    var axis = document.getElementById(id);
    for (var i = 0; i < count; i++) {
        var span = document.createElement('span');
        span.textContent = (first - i * step).toFixed(digits);
        axis.insertBefore(span, axis.lastElementChild);
    }
}

drawLeft();
drawPrice();
drawFunds();
drawTime();
fillAxis('left-axis', 4414, 3.5, 11, 1);
fillAxis('price-axis', 4403.5, 2.75, 16, 2);
```
